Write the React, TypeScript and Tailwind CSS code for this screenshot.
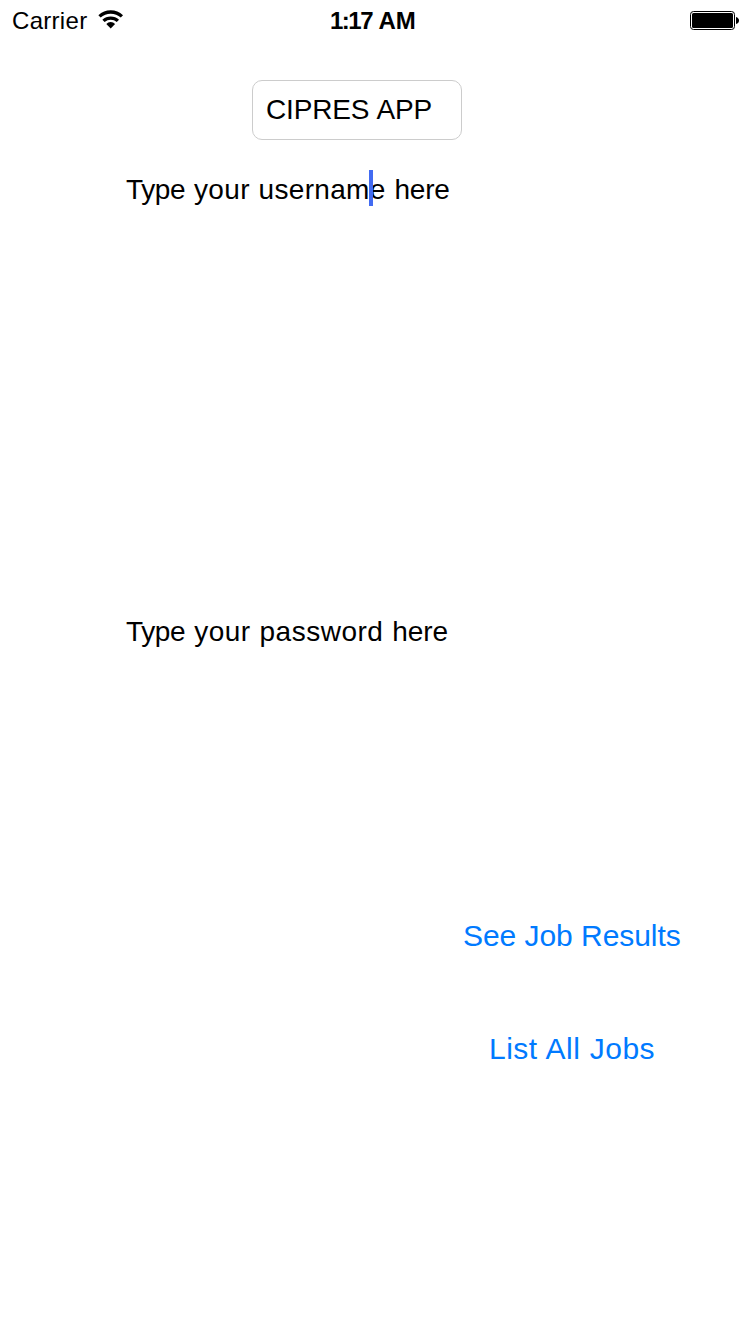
const link = "h-9 self-start whitespace-nowrap text-[30px] leading-9 text-[#007aff]";

export default function App() {
  return (
    <main className="flex h-[1334px] w-[750px] flex-col overflow-hidden bg-white font-['Liberation_Sans',Arial,sans-serif] text-black">
      <header className="grid h-[42px] grid-cols-[318px_auto_1fr] items-center pl-3 pr-[11px]">
        <div className="flex items-center gap-[11px]">
          <span className="text-[24px] leading-10 tracking-[0.3px]">Carrier</span>
          <svg className="mb-[3px] h-[19px] w-[26px]" viewBox="0 0 26 19" fill="none" stroke="#000" strokeWidth="3.3">
            <path d="M1.5 6.4A16.5 16.5 0 0 1 23.9 6.4" />
            <path d="M5.5 10.9A10.5 10.5 0 0 1 19.9 10.9" />
            <path d="M12.7 18.6L8.3 14A6 6 0 0 1 17.1 14Z" fill="#000" stroke="none" />
          </svg>
        </div>
        <span className="whitespace-nowrap text-[24px] font-bold leading-10 tracking-[-0.2px]">
          <span className="tracking-[-1.5px]">1:17</span>
          <span className="ml-[1px]"> AM</span>
        </span>
        <svg className="h-5 w-[49px] justify-self-end" viewBox="0 0 49 20">
          <rect x="0.5" y="0.5" width="44" height="18" rx="3" fill="none" stroke="#000" />
          <rect x="2" y="2" width="41" height="15" rx="1.5" />
          <path d="M46 6Q49 7 49 9.5T46 13Z" />
        </svg>
      </header>
      <div className="ml-[252px] mt-[38px] flex h-[60px] w-[210px] items-center rounded-[10px] border border-[#ccc] pl-[13px]">
        <span className="whitespace-nowrap text-[28px] tracking-[-0.15px] [word-spacing:1px]">CIPRES APP</span>
      </div>
      <div className="ml-[126px] mt-[32px] flex h-9 items-center">
        <span className="relative whitespace-nowrap text-[28px] leading-9 tracking-[0.33px] [word-spacing:0.6px]">
          <span className="tracking-[-0.35px]">Type</span> your username <span className="tracking-[-0.2px]">here</span>
          <i className="absolute -top-[2px] left-[243px] h-9 w-1 bg-[#426bf2]" />
        </span>
      </div>
      <div className="ml-[126px] mt-[406px] flex h-9 items-center">
        <span className="whitespace-nowrap text-[28px] tracking-[0.5px] [word-spacing:0.6px]">
          <span className="tracking-[-0.35px]">Type</span> your password <span className="tracking-[-0.1px]">here</span>
        </span>
      </div>
      <button className={`${link} ml-[463px] mt-[268px] tracking-[-0.05px]`}>See Job Results</button>
      <button className={`${link} ml-[489px] mt-[77px] tracking-[0.5px] [word-spacing:0.6px]`}>List All Jobs</button>
    </main>
  );
}
